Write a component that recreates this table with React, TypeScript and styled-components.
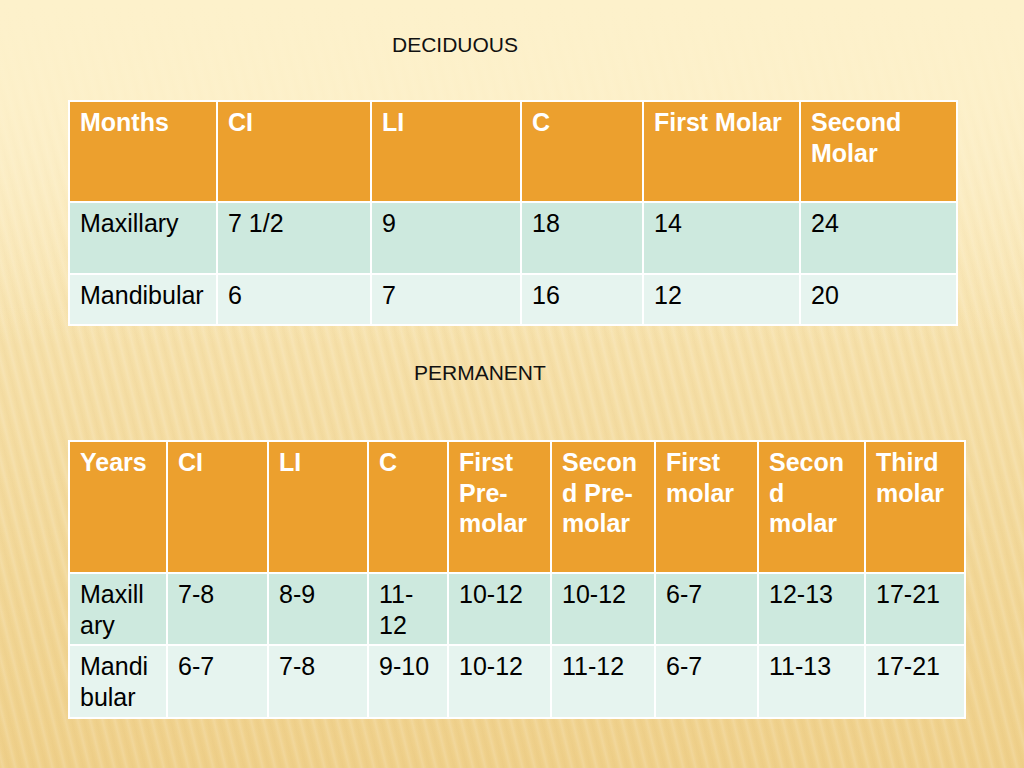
import React from 'react';
import styled, {createGlobalStyle} from 'styled-components';

const GlobalStyle = createGlobalStyle`
    html, body {
        margin: 0;
        padding: 0;
    }
    body {
        font-family: "Liberation Sans", Arial, sans-serif;
    }
`;

const Slide = styled.div`
    width: 1024px;
    height: 768px;
    overflow: hidden;
    box-sizing: border-box;
    padding: 33px 0 0 68px;
    background:
        linear-gradient(180deg, #fdf1cb 0%, rgba(253, 241, 203, 0.85) 12%, rgba(253, 241, 203, 0) 45%),
        repeating-linear-gradient(
            76deg,
            rgba(255, 255, 255, 0) 0px,
            rgba(255, 255, 255, 0.13) 3px,
            rgba(255, 255, 255, 0) 6px,
            rgba(190, 140, 50, 0.045) 9px,
            rgba(255, 255, 255, 0) 12px
        ),
        linear-gradient(180deg, #fdf0c8 0%, #fae9bd 20%, #f6e0a9 45%, #f2d797 75%, #efd08a 100%);
`;

const Heading = styled.div<{$indent: number; $gap: number}>`
    margin-left: ${(p) => p.$indent}px;
    margin-top: ${(p) => p.$gap}px;
    font-size: 21px;
    line-height: 24px;
    color: #111;
`;

const Table = styled.table<{$top: number}>`
    margin-top: ${(p) => p.$top}px;
    border-collapse: collapse;
    table-layout: fixed;
    border: 2px solid rgba(255, 255, 255, 0.85);
`;

const Col = styled.col<{$w: number}>`
    width: ${(p) => p.$w}px;
`;

const Row = styled.tr<{$h: number; $tone: 'head' | 'dark' | 'light'}>`
    height: ${(p) => p.$h}px;
    background: ${(p) => (p.$tone === 'head' ? '#eca02e' : p.$tone === 'dark' ? '#cde9de' : '#e6f4ef')};
`;

const HeadCell = styled.th`
    border: 2px solid #fff;
    padding: 5px 10px 2px;
    vertical-align: top;
    text-align: left;
    font-size: 25px;
    line-height: 30.5px;
    font-weight: bold;
    color: #fff;
    overflow-wrap: anywhere;
`;

const Cell = styled.td`
    border: 2px solid #fff;
    padding: 5px 10px 2px;
    vertical-align: top;
    font-size: 25px;
    line-height: 30.5px;
    color: #000;
    overflow-wrap: anywhere;
`;

type TableData = {
    widths: number[];
    heights: number[];
    head: string[];
    rows: string[][];
};

const deciduous: TableData = {
    widths: [148, 154, 150, 122, 157, 157],
    heights: [101, 72, 51],
    head: ['Months', 'CI', 'LI', 'C', 'First Molar', 'Second Molar'],
    rows: [
        ['Maxillary', '7 1/2', '9', '18', '14', '24'],
        ['Mandibular', '6', '7', '16', '12', '20'],
    ],
};

const permanent: TableData = {
    widths: [98, 101, 100, 80, 103, 104, 103, 107, 100],
    heights: [132, 72, 73],
    head: ['Years', 'CI', 'LI', 'C', 'First Pre-molar', 'Second Pre-molar', 'First molar', 'Second molar', 'Third molar'],
    rows: [
        ['Maxillary', '7-8', '8-9', '11-12', '10-12', '10-12', '6-7', '12-13', '17-21'],
        ['Mandibular', '6-7', '7-8', '9-10', '10-12', '11-12', '6-7', '11-13', '17-21'],
    ],
};

function DataTable({data, top}: {data: TableData; top: number}) {
    return (
        <Table $top={top}>
            <colgroup>
                {data.widths.map((w, i) => (
                    <Col
                        key={i}
                        $w={w}
                    />
                ))}
            </colgroup>
            <thead>
                <Row
                    $h={data.heights[0]}
                    $tone='head'
                >
                    {data.head.map((h) => (
                        <HeadCell key={h}>{h}</HeadCell>
                    ))}
                </Row>
            </thead>
            <tbody>
                {data.rows.map((row, r) => (
                    <Row
                        key={r}
                        $h={data.heights[r + 1]}
                        $tone={r === 0 ? 'dark' : 'light'}
                    >
                        {row.map((v, c) => (
                            <Cell key={c}>{v}</Cell>
                        ))}
                    </Row>
                ))}
            </tbody>
        </Table>
    );
}

export default function App() {
    return (
        <>
            <GlobalStyle/>
            <Slide>
                <Heading
                    $indent={324}
                    $gap={0}
                >
                    {'DECIDUOUS'}
                </Heading>
                <DataTable
                    data={deciduous}
                    top={43}
                />
                <Heading
                    $indent={346}
                    $gap={35}
                >
                    {'PERMANENT'}
                </Heading>
                <DataTable
                    data={permanent}
                    top={55}
                />
            </Slide>
        </>
    );
}
